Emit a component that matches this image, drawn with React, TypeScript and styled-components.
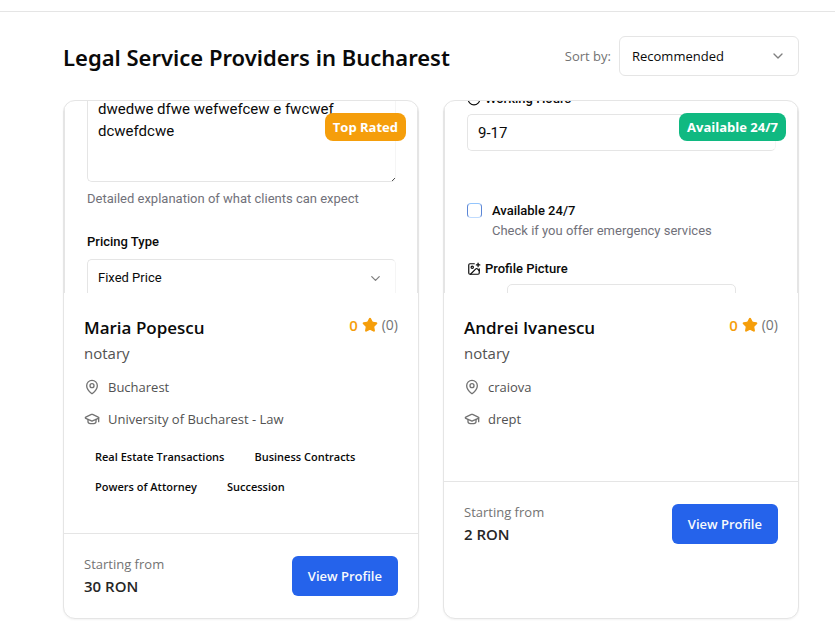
import React from "react";
import styled, { createGlobalStyle } from "styled-components";
import { ChevronDown, Clock, GraduationCap, ImagePlus, MapPin, Star } from "lucide-react";

const line = "#e5e5e5";
const ink = "#0a0a0a";
const muted = "#737373";

const GlobalStyle = createGlobalStyle`
  *, *::before, *::after { box-sizing: border-box; }
  body {
    margin: 0;
    background: #fff;
    color: ${ink};
    font-family: "Open Sans", "Noto Sans", sans-serif;
    font-size: 13px;
    line-height: 20px;
  }
  h1, h2, p, ul { margin: 0; padding: 0; }
  button, input, select, textarea { font: inherit; color: inherit; }
`;

const Page = styled.div`
  padding-top: 11px;
`;

const Main = styled.main`
  border-top: 1px solid ${line};
  padding: 24px 36px 12px 63px;
`;

const Toolbar = styled.header`
  display: flex;
  align-items: center;
  justify-content: space-between;
  margin-bottom: 24px;
`;

const Title = styled.h1`
  padding-top: 2px;
  font-family: "Noto Sans", "Open Sans", sans-serif;
  font-size: 22px;
  line-height: 32px;
  font-weight: 600;
  white-space: nowrap;
`;

const SortGroup = styled.div`
  display: flex;
  align-items: center;
  gap: 8px;
`;

const SortLabel = styled.label`
  color: ${muted};
  white-space: nowrap;
`;

const SelectWrap = styled.div<{ $width?: string }>`
  display: grid;
  align-items: center;
  width: ${(p) => p.$width ?? "100%"};

  > * { grid-area: 1 / 1; }
  > svg {
    justify-self: end;
    margin-right: 13px;
    color: #7f7f7f;
    pointer-events: none;
  }
`;

const SortSelect = styled.select`
  appearance: none;
  width: 100%;
  height: 40px;
  padding: 0 12px;
  border: 1px solid ${line};
  border-radius: 6px;
  background: #fff;
`;

const Grid = styled.div`
  display: grid;
  grid-template-columns: repeat(2, minmax(0, 1fr));
  gap: 24px;
`;

const Card = styled.article`
  position: relative;
  display: flex;
  flex-direction: column;
  overflow: hidden;
  border: 1px solid ${line};
  border-radius: 12px;
  background: #fff;
  box-shadow: 0 1px 2px rgba(0, 0, 0, 0.05);
`;

const Badge = styled.span<{ $color: string }>`
  position: absolute;
  top: 12px;
  right: 12px;
  padding: 4px 8px;
  border-radius: 8px;
  background: ${(p) => p.$color};
  color: #fff;
  font-weight: 700;
`;

const Preview = styled.div`
  height: 192px;
  overflow: hidden;
  padding: 0 21px 0 22px;
  border: solid ${line};
  border-width: 0 1px;
  font-family: Roboto, sans-serif;
  font-size: 13px;
  line-height: 20px;
`;

const NotesWrap = styled.div`
  display: grid;
  margin-top: -11px;

  > * { grid-area: 1 / 1; }
  > svg {
    place-self: end;
    margin: 0 1px 1px 0;
    pointer-events: none;
  }
`;

const Notes = styled.textarea`
  display: block;
  width: 100%;
  height: 92px;
  padding: 7px 10px;
  border: 1px solid ${line};
  border-right-color: #f5f5f5;
  border-radius: 5px;
  background: #fff;
  font-size: 15px;
  line-height: 22px;
  resize: none;
  overflow: hidden;
`;

const Hint = styled.p`
  margin: 8px 0 24px;
  color: #71717a;
  line-height: 18px;
`;

const FieldLabel = styled.label`
  display: flex;
  align-items: center;
  gap: 4px;
  font-weight: 500;
`;

const PricingLabel = styled(FieldLabel)`
  margin-bottom: 7px;
`;

const HoursLabel = styled(FieldLabel)`
  margin: -12px 0 5px;
`;

const FieldSelect = styled.select`
  appearance: none;
  width: 100%;
  height: 38px;
  padding: 0 10px;
  border: 1px solid ${line};
  border-right-color: #f5f5f5;
  border-radius: 5px;
  background: #fff;
`;

const FieldInput = styled.input`
  display: block;
  width: 100%;
  height: 37px;
  padding: 0 10px;
  border: 1px solid ${line};
  border-right-color: #f5f5f5;
  border-radius: 5px;
  font-size: 15px;
`;

const CheckRow = styled.div`
  display: flex;
  gap: 10px;
  margin: 50px 0 18px;
`;

const CheckBox = styled.input`
  appearance: none;
  flex: none;
  width: 15px;
  height: 15px;
  margin: 2px 0 0;
  border: 1px solid #5b86d6;
  border-top-color: #93c5fd;
  border-bottom-color: #bfdbfe;
  border-radius: 4px;
`;

const CheckHint = styled.p`
  color: #71717a;
`;

const DropZone = styled.div`
  height: 40px;
  margin: 5px 40px 0;
  border: 1px solid ${line};
  border-radius: 5px;
`;

const Body = styled.div`
  padding: 20px;
`;

const NameRow = styled.div`
  display: flex;
  justify-content: space-between;
  align-items: flex-start;
`;

const Name = styled.h2`
  font-size: 17px;
  line-height: 30px;
  font-weight: 600;
`;

const Profession = styled.p`
  margin-bottom: 14px;
  color: #525252;
  font-size: 15px;
  line-height: 20px;
`;

const Rating = styled.div`
  display: flex;
  align-items: center;
  gap: 4px;
  height: 24px;
  color: #f59e0b;
  font-size: 15px;
  font-weight: 600;
`;

const Reviews = styled.span`
  color: ${muted};
  font-size: 14px;
  font-weight: 400;
`;

const Detail = styled.p`
  display: flex;
  align-items: center;
  gap: 8px;
  color: #525252;

  & + & { margin-top: 12px; }
  svg { color: ${muted}; }
`;

const Tags = styled.ul`
  display: flex;
  flex-wrap: wrap;
  gap: 8px;
  margin: 16px 0;
  list-style: none;
`;

const Tag = styled.li`
  padding: 4px 11px 2px;
  font-size: 11px;
  line-height: 16px;
  font-weight: 600;
`;

const Footer = styled.footer`
  display: flex;
  align-items: center;
  justify-content: space-between;
  padding: 20px;
  border-top: 1px solid ${line};
`;

const PriceLabel = styled.p`
  color: ${muted};
`;

const Price = styled.p`
  color: #262626;
  font-size: 15px;
  line-height: 24px;
  font-weight: 600;
`;

const ProfileButton = styled.button`
  height: 40px;
  padding: 0 16px;
  border: 0;
  border-radius: 6px;
  background: #2563eb;
  color: #f8fafc;
  font-weight: 600;
  cursor: pointer;
`;

function ServicePreview() {
  return (
    <Preview>
      <NotesWrap>
        <Notes aria-label="Service description" defaultValue={"dwedwe dfwe wefwefcew e fwcwef\ndcwefdcwe"} />
        <svg width="3" height="3" viewBox="0 0 3 3" aria-hidden="true">
          <path d="M0 3 3 0" stroke="#525252" />
        </svg>
      </NotesWrap>
      <Hint>Detailed explanation of what clients can expect</Hint>
      <PricingLabel htmlFor="pricing">Pricing Type</PricingLabel>
      <SelectWrap>
        <FieldSelect id="pricing">
          <option>Fixed Price</option>
        </FieldSelect>
        <ChevronDown size={15} strokeWidth={2} />
      </SelectWrap>
    </Preview>
  );
}

function AvailabilityPreview() {
  return (
    <Preview>
      <HoursLabel htmlFor="hours">
        <Clock size={14} />
        Working Hours
      </HoursLabel>
      <FieldInput id="hours" defaultValue="9-17" />
      <CheckRow>
        <CheckBox type="checkbox" id="always" />
        <div>
          <FieldLabel htmlFor="always">Available 24/7</FieldLabel>
          <CheckHint>Check if you offer emergency services</CheckHint>
        </div>
      </CheckRow>
      <FieldLabel as="div">
        <ImagePlus size={14} />
        Profile Picture
      </FieldLabel>
      <DropZone />
    </Preview>
  );
}

type Provider = {
  name: string;
  badge: string;
  badgeColor: string;
  city: string;
  school: string;
  tags: string[];
  price: string;
  preview: React.ReactNode;
};

const providers: Provider[] = [
  {
    name: "Maria Popescu",
    badge: "Top Rated",
    badgeColor: "#f59e0b",
    city: "Bucharest",
    school: "University of Bucharest - Law",
    tags: ["Real Estate Transactions", "Business Contracts", "Powers of Attorney", "Succession"],
    price: "30 RON",
    preview: <ServicePreview />,
  },
  {
    name: "Andrei Ivanescu",
    badge: "Available 24/7",
    badgeColor: "#10b981",
    city: "craiova",
    school: "drept",
    tags: [],
    price: "2 RON",
    preview: <AvailabilityPreview />,
  },
];

function ProviderCard({ provider }: { provider: Provider }) {
  return (
    <Card>
      {provider.preview}
      <Badge $color={provider.badgeColor}>{provider.badge}</Badge>
      <Body>
        <NameRow>
          <Name>{provider.name}</Name>
          <Rating>
            0
            <Star size={16} fill="currentColor" />
            <Reviews>(0)</Reviews>
          </Rating>
        </NameRow>
        <Profession>notary</Profession>
        <Detail>
          <MapPin size={16} />
          {provider.city}
        </Detail>
        <Detail>
          <GraduationCap size={16} />
          {provider.school}
        </Detail>
        <Tags>
          {provider.tags.map((tag) => (
            <Tag key={tag}>{tag}</Tag>
          ))}
        </Tags>
      </Body>
      <Footer>
        <div>
          <PriceLabel>Starting from</PriceLabel>
          <Price>{provider.price}</Price>
        </div>
        <ProfileButton type="button">View Profile</ProfileButton>
      </Footer>
    </Card>
  );
}

export default function App() {
  return (
    <Page>
      <GlobalStyle />
      <Main>
        <Toolbar>
          <Title>Legal Service Providers in Bucharest</Title>
          <SortGroup>
            <SortLabel htmlFor="sort">Sort by:</SortLabel>
            <SelectWrap $width="180px">
              <SortSelect id="sort">
                <option>Recommended</option>
              </SortSelect>
              <ChevronDown size={16} strokeWidth={2} />
            </SelectWrap>
          </SortGroup>
        </Toolbar>
        <Grid>
          {providers.map((provider) => (
            <ProviderCard key={provider.name} provider={provider} />
          ))}
        </Grid>
      </Main>
    </Page>
  );
}
